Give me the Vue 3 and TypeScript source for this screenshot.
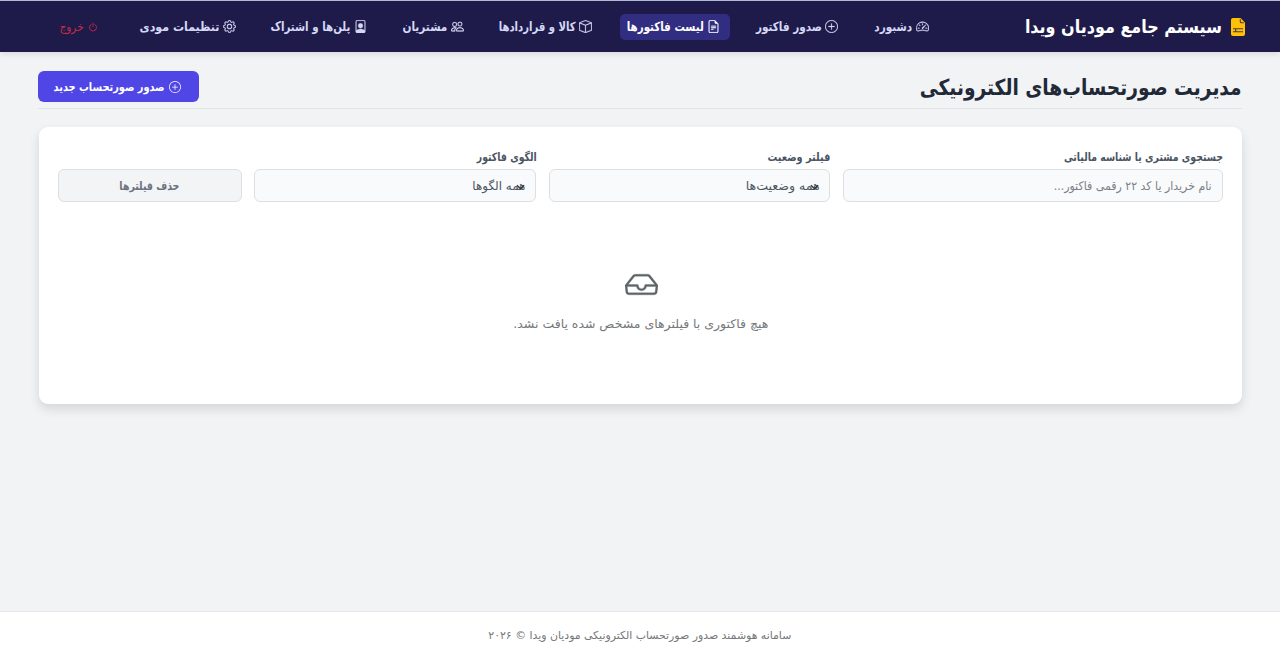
<script setup lang="ts">
import type { Directive } from 'vue'

interface NavItem {
  label: string
  icon: string
  width: number
  textWidth: number
  active?: boolean
}

const icons: Record<string, string> = {
  speedometer:
    'M8 4a.5.5 0 0 1 .5.5V6a.5.5 0 0 1-1 0V4.5A.5.5 0 0 1 8 4M3.732 5.732a.5.5 0 0 1 .707 0l.915.914a.5.5 0 1 1-.708.708l-.914-.915a.5.5 0 0 1 0-.707M2 10a.5.5 0 0 1 .5-.5h1.586a.5.5 0 0 1 0 1H2.5A.5.5 0 0 1 2 10m9.5 0a.5.5 0 0 1 .5-.5h1.5a.5.5 0 0 1 0 1H12a.5.5 0 0 1-.5-.5m.754-4.246a.39.39 0 0 0-.527-.02L7.547 9.31a.91.91 0 1 0 1.302 1.258l3.434-4.297a.39.39 0 0 0-.029-.518zM0 10a8 8 0 1 1 15.547 2.661c-.442 1.253-1.845 1.602-2.932 1.25C11.309 13.488 9.475 13 8 13c-1.474 0-3.31.488-4.615.911-1.087.352-2.49.003-2.932-1.25A8 8 0 0 1 0 10m8-7a7 7 0 0 0-6.603 9.329c.203.575.923.876 1.68.63C4.397 12.533 6.358 12 8 12s3.604.532 4.923.96c.757.245 1.477-.056 1.68-.631A7 7 0 0 0 8 3',
  plus: 'M8 15A7 7 0 1 1 8 1a7 7 0 0 1 0 14m0 1A8 8 0 1 0 8 0a8 8 0 0 0 0 16M8 4a.5.5 0 0 1 .5.5v3h3a.5.5 0 0 1 0 1h-3v3a.5.5 0 0 1-1 0v-3h-3a.5.5 0 0 1 0-1h3v-3A.5.5 0 0 1 8 4',
  file: 'M5.5 7a.5.5 0 0 0 0 1h5a.5.5 0 0 0 0-1zM5 9.5a.5.5 0 0 1 .5-.5h5a.5.5 0 0 1 0 1h-5a.5.5 0 0 1-.5-.5m0 2a.5.5 0 0 1 .5-.5h2a.5.5 0 0 1 0 1h-2a.5.5 0 0 1-.5-.5M9.5 0H4a2 2 0 0 0-2 2v12a2 2 0 0 0 2 2h8a2 2 0 0 0 2-2V4.5zm0 1v2A1.5 1.5 0 0 0 11 4.5h2V14a1 1 0 0 1-1 1H4a1 1 0 0 1-1-1V2a1 1 0 0 1 1-1z',
  box: 'M8.186 1.113a.5.5 0 0 0-.372 0L1.846 3.5 8 5.961 14.154 3.5zM15 4.239l-6.5 2.6v7.922l6.5-2.6V4.24zM7.5 14.762V6.838L1 4.239v7.923zM7.443.184a1.5 1.5 0 0 1 1.114 0l7.129 2.852A.5.5 0 0 1 16 3.5v8.662a1 1 0 0 1-.629.928l-7.185 2.874a.5.5 0 0 1-.372 0L.63 13.09a1 1 0 0 1-.63-.928V3.5a.5.5 0 0 1 .314-.464z',
  people:
    'M15 14s1 0 1-1-1-4-5-4-5 3-5 4 1 1 1 1zm-7.978-1L7 12.996c.001-.264.167-1.03.76-1.72C8.312 10.629 9.282 10 11 10c1.717 0 2.687.63 3.24 1.276.593.69.758 1.457.76 1.72l-.008.002-.014.002zM11 7a2 2 0 1 0 0-4 2 2 0 0 0 0 4m3-2a3 3 0 1 1-6 0 3 3 0 0 1 6 0M6.936 9.28a6 6 0 0 0-1.23-.247A7 7 0 0 0 5 9c-4 0-5 3-5 4q0 1 1 1h4.216A2.24 2.24 0 0 1 5 13c0-1.01.377-2.042 1.09-2.904.243-.294.526-.569.846-.816M4.92 10A5.5 5.5 0 0 0 4 13H1c0-.26.164-1.03.76-1.724.545-.636 1.492-1.256 3.16-1.275ZM1.5 5.5a3 3 0 1 1 6 0 3 3 0 0 1-6 0m3-2a2 2 0 1 0 0 4 2 2 0 0 0 0-4',
  person:
    'M12 1a1 1 0 0 1 1 1v10.755S12 11 8 11s-5 1.755-5 1.755V2a1 1 0 0 1 1-1zM4 0a2 2 0 0 0-2 2v12a2 2 0 0 0 2 2h8a2 2 0 0 0 2-2V2a2 2 0 0 0-2-2zM8 10a3 3 0 1 0 0-6 3 3 0 0 0 0 6',
  gear: 'M8 4.754a3.246 3.246 0 1 0 0 6.492 3.246 3.246 0 0 0 0-6.492M5.754 8a2.246 2.246 0 1 1 4.492 0 2.246 2.246 0 0 1-4.492 0M9.796 1.343c-.527-1.79-3.065-1.79-3.592 0l-.094.319a.873.873 0 0 1-1.255.52l-.292-.16c-1.64-.892-3.433.902-2.54 2.541l.159.292a.873.873 0 0 1-.52 1.255l-.319.094c-1.79.527-1.79 3.065 0 3.592l.319.094a.873.873 0 0 1 .52 1.255l-.16.292c-.892 1.64.901 3.434 2.541 2.54l.292-.159a.873.873 0 0 1 1.255.52l.094.319c.527 1.79 3.065 1.79 3.592 0l.094-.319a.873.873 0 0 1 1.255-.52l.292.16c1.64.893 3.434-.902 2.54-2.541l-.159-.292a.873.873 0 0 1 .52-1.255l.319-.094c1.79-.527 1.79-3.065 0-3.592l-.319-.094a.873.873 0 0 1-.52-1.255l.16-.292c.893-1.64-.902-3.433-2.541-2.54l-.292.159a.873.873 0 0 1-1.255-.52zm-2.633.283c.246-.835 1.428-.835 1.674 0l.094.319a1.873 1.873 0 0 0 2.693 1.115l.291-.16c.764-.415 1.6.42 1.184 1.185l-.159.292a1.873 1.873 0 0 0 1.116 2.692l.318.094c.835.246.835 1.428 0 1.674l-.319.094a1.873 1.873 0 0 0-1.115 2.693l.16.291c.415.764-.42 1.6-1.185 1.184l-.291-.159a1.873 1.873 0 0 0-2.693 1.116l-.094.318c-.246.835-1.428.835-1.674 0l-.094-.319a1.873 1.873 0 0 0-2.692-1.115l-.292.16c-.764.415-1.6-.42-1.184-1.185l.159-.291A1.873 1.873 0 0 0 1.945 8.93l-.319-.094c-.835-.246-.835-1.428 0-1.674l.319-.094A1.873 1.873 0 0 0 3.06 4.377l-.16-.292c-.415-.764.42-1.6 1.185-1.184l.292.159a1.873 1.873 0 0 0 2.692-1.115z',
  power: 'M7.5 1v7h1V1zM3 8.812a5 5 0 0 1 2.578-4.375l-.485-.874A6 6 0 1 0 11 3.616l-.501.865A5 5 0 1 1 3 8.812',
  inbox:
    'M4.98 4a.5.5 0 0 0-.39.188L1.54 8H6a.5.5 0 0 1 .5.5 1.5 1.5 0 1 0 3 0A.5.5 0 0 1 10 8h4.46l-3.05-3.812A.5.5 0 0 0 11.02 4zm9.954 5H10.45a2.5 2.5 0 0 1-4.9 0H1.066l.32 2.562a.5.5 0 0 0 .497.438h12.234a.5.5 0 0 0 .496-.438zM3.809 3.563A1.5 1.5 0 0 1 4.981 3h6.038a1.5 1.5 0 0 1 1.172.563l3.7 4.625a.5.5 0 0 1 .105.374l-.39 3.124A1.5 1.5 0 0 1 14.117 13H1.883a1.5 1.5 0 0 1-1.489-1.314l-.39-3.124a.5.5 0 0 1 .106-.374z',
}

const nav: NavItem[] = [
  { label: 'دشبورد', icon: 'speedometer', width: 73, textWidth: 38 },
  { label: 'صدور فاکتور', icon: 'plus', width: 101, textWidth: 66 },
  { label: 'لیست فاکتورها', icon: 'file', width: 110, textWidth: 77, active: true },
  { label: 'کالا و قراردادها', icon: 'box', width: 111, textWidth: 77 },
  { label: 'مشتریان', icon: 'people', width: 79, textWidth: 45 },
  { label: 'پلن‌ها و اشتراک', icon: 'person', width: 113, textWidth: 80 },
  { label: 'تنظیمات مودی', icon: 'gear', width: 114, textWidth: 80 },
]

/* Condenses or widens a line of text to the given width, anchored at its right edge. */
const vFit: Directive<HTMLElement, number> = {
  mounted(el, { value }) {
    const natural = el.getBoundingClientRect().width
    el.style.transform = `scaleX(${value / natural})`
    el.style.marginLeft = `${value - natural}px`
  },
}
</script>

<template>
  <div class="page" dir="rtl">
    <header class="topbar">
      <div class="brand">
        <svg class="brand-icon" viewBox="0 0 14 18">
          <path d="M2 0h7.500L14 4.500V16a2 2 0 0 1-2 2H2a2 2 0 0 1-2-2V2a2 2 0 0 1 2-2" />
          <path class="brand-detail" d="M9.300 1.200v2.600a1 1 0 0 0 1 1h2.600M2 10.700h10M2 13.800h10M4.700 10.700v3.100" />
        </svg>
        <span v-fit="197" class="fit">سیستم جامع مودیان ویدا</span>
      </div>
      <nav class="nav">
        <a
          v-for="item in nav"
          :key="item.label"
          class="nav-item"
          :class="{ active: item.active }"
          :style="{ width: item.width + 'px' }"
        >
          <svg class="nav-icon" viewBox="0 0 16 16"><path :d="icons[item.icon]" /></svg>
          <span v-fit="item.textWidth" class="fit">{{ item.label }}</span>
        </a>
      </nav>
      <a class="logout">
        <svg class="logout-icon" viewBox="0 0 16 16"><path :d="icons.power" /></svg>
        <span v-fit="24" class="fit">خروج</span>
      </a>
    </header>

    <main class="content">
      <div class="heading">
        <h1><span v-fit="322" class="fit">مدیریت صورتحساب‌های الکترونیکی</span></h1>
        <button class="create">
          <svg class="create-icon" viewBox="0 0 16 16"><path :d="icons.plus" /></svg>
          <span v-fit="111" class="fit">صدور صورتحساب جدید</span>
        </button>
      </div>

      <section class="card">
        <div class="filters">
          <div class="field">
            <div class="label"><span v-fit="159" class="fit">جستجوی مشتری یا شناسه مالیاتی</span></div>
            <div class="control placeholder">
              <span v-fit="158" class="fit">نام خریدار یا کد ۲۲ رقمی فاکتور...</span>
            </div>
          </div>
          <div class="field">
            <div class="label"><span v-fit="63" class="fit">فیلتر وضعیت</span></div>
            <div class="control">
              <span v-fit="74" class="fit">همه وضعیت‌ها</span>
              <svg class="chevron" viewBox="0 0 10 6"><path d="M1 1l4 4 4-4" /></svg>
            </div>
          </div>
          <div class="field">
            <div class="label"><span v-fit="60" class="fit">الگوی فاکتور</span></div>
            <div class="control">
              <span v-fit="53" class="fit">همه الگوها</span>
              <svg class="chevron" viewBox="0 0 10 6"><path d="M1 1l4 4 4-4" /></svg>
            </div>
          </div>
          <button class="control clear"><span v-fit="60" class="fit">حذف فیلترها</span></button>
        </div>
        <div class="empty">
          <svg class="empty-icon" viewBox="0 0 16 16"><path :d="icons.inbox" /></svg>
          <span v-fit="255" class="fit">هیچ فاکتوری با فیلترهای مشخص شده یافت نشد.</span>
        </div>
      </section>
    </main>

    <footer class="footer">
      <span v-fit="303" class="fit">سامانه هوشمند صدور صورتحساب الکترونیکی مودیان ویدا © ۲۰۲۶</span>
    </footer>
  </div>
</template>

<style>
body {
  margin: 0;
}
</style>

<style scoped>
.page {
  box-sizing: border-box;
  height: 657px;
  display: flex;
  flex-direction: column;
  overflow: hidden;
  background: #f2f3f5;
  font-family: 'DejaVu Sans', sans-serif;
  font-size: 12px;
  color: #1f2937;
}
.fit {
  display: inline-block;
  white-space: nowrap;
  transform-origin: right center;
}
svg {
  display: block;
  flex: none;
  fill: currentColor;
}
.topbar {
  box-sizing: border-box;
  flex: none;
  height: 52px;
  display: flex;
  align-items: center;
  padding: 0 35px 0 60px;
  border-top: 1px solid #b3b9d2;
  background: #1e1b4b;
  box-shadow: 0 2px 6px rgba(0, 0, 0, 0.1);
}
.brand {
  width: 305px;
  display: flex;
  align-items: center;
  gap: 9px;
  font-size: 18px;
  font-weight: 700;
  color: #fff;
}
.brand-icon {
  width: 14px;
  height: 18px;
  color: #ffc107;
}
.brand-detail {
  fill: none;
  stroke: #4a3a3c;
  stroke-width: 1.1;
}
.nav {
  display: flex;
  gap: 17.6px;
  margin-right: 1px;
}
.nav-item {
  box-sizing: border-box;
  height: 26px;
  display: flex;
  align-items: center;
  gap: 3.500px;
  padding-right: 10px;
  border-radius: 5px;
  font-size: 12.5px;
  font-weight: 700;
  color: #d5d8f5;
}
.nav-item.active {
  background: #312e81;
  color: #fff;
}
.nav-icon {
  width: 13px;
  height: 13px;
  stroke: currentColor;
  stroke-width: 0.25;
}
.logout {
  margin-right: auto;
  display: flex;
  align-items: center;
  gap: 4px;
  padding-top: 1px;
  color: #c22b48;
}
.logout-icon {
  width: 10px;
  height: 10px;
  stroke: currentColor;
  stroke-width: 0.3;
}
.content {
  flex: 1;
  padding: 0 38px;
}
.heading {
  box-sizing: border-box;
  height: 57px;
  display: flex;
  justify-content: space-between;
  align-items: flex-start;
  padding-top: 19px;
  border-bottom: 1px solid #e1e3e7;
}
h1 {
  margin: 0;
  padding-top: 1px;
  font-size: 22px;
  line-height: 32px;
  font-weight: 700;
}
.create {
  width: 161px;
  height: 31px;
  display: flex;
  align-items: center;
  gap: 4px;
  padding: 0 18px 0 0;
  border: 0;
  border-radius: 6px;
  background: #4f46e5;
  font: 700 11.5px 'DejaVu Sans', sans-serif;
  color: #fff;
}
.create-icon {
  width: 12px;
  height: 12px;
}
.card {
  box-sizing: border-box;
  height: 277px;
  margin: 18px 0 0 1px;
  padding: 21px 19px 0 0;
  border-radius: 9px;
  background: #fff;
  box-shadow: 0 5px 11px rgba(0, 0, 0, 0.12);
}
.filters {
  display: grid;
  grid-template-columns: 380px 281px 282px 184px;
  column-gap: 12.8px;
  align-items: end;
  justify-content: start;
}
.label {
  box-sizing: border-box;
  height: 21px;
  padding-top: 1px;
  line-height: 17px;
  font-size: 11.5px;
  font-weight: 700;
  color: #4b5563;
}
.control {
  position: relative;
  box-sizing: border-box;
  height: 33px;
  display: flex;
  align-items: center;
  padding: 0 10px;
  border: 1px solid #dddfe3;
  border-radius: 6px;
  background: #f9fafb;
  color: #4b5563;
}
.placeholder {
  color: #7b7f86;
}
.chevron {
  position: absolute;
  right: 10px;
  top: 14px;
  width: 9px;
  height: 6px;
  fill: none;
  stroke: #343a40;
  stroke-width: 1.6;
}
.clear {
  justify-content: center;
  background: #f3f4f6;
  font: 700 11.5px 'DejaVu Sans', sans-serif;
  color: #6b7280;
}
.empty {
  display: flex;
  flex-direction: column;
  align-items: center;
  gap: 16px;
  margin-top: 66px;
  padding-left: 20px;
  color: #74777a;
}
.empty-icon {
  width: 33px;
  height: 33px;
  stroke: currentColor;
  stroke-width: 0.15;
  color: #5d6468;
}
.footer {
  box-sizing: border-box;
  flex: none;
  height: 46px;
  display: flex;
  align-items: center;
  justify-content: center;
  padding-top: 2px;
  border-top: 1px solid #e5e7eb;
  background: #fff;
  font-size: 11px;
  color: #74777a;
}
</style>
